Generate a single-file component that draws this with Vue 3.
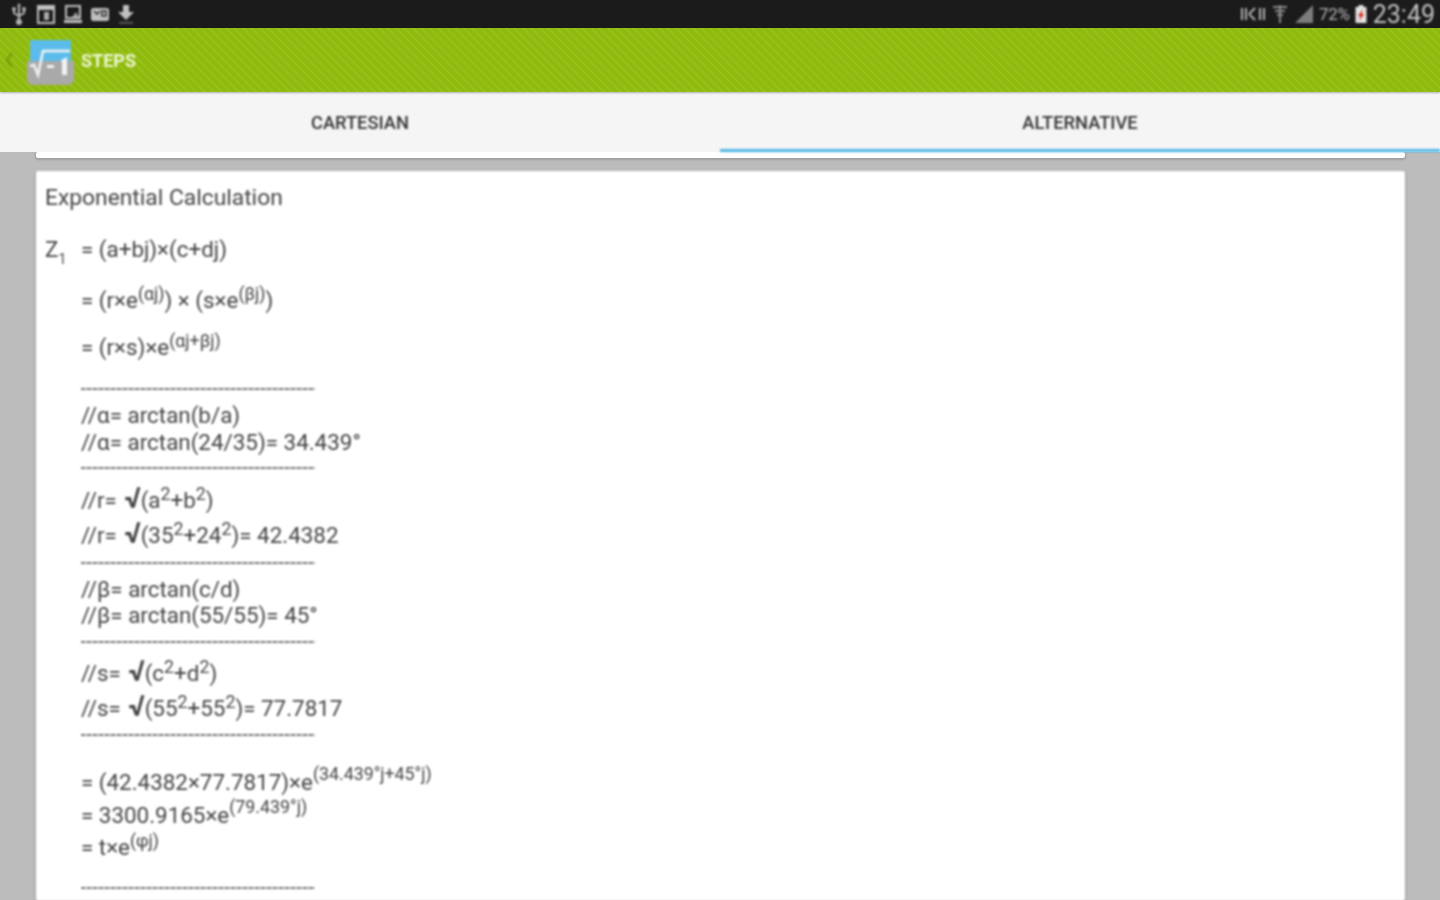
<script setup>
</script>

<template>
  <div class="screen">
    <header class="status">
      <div class="status-left">
        <svg width="20" height="24" viewBox="0 0 20 24" fill="none" stroke="#b4b4b4" stroke-width="2"><path d="M10 3v17M5 8v3l5 3 5-3V8"/><circle cx="10" cy="20" r="2" fill="#b4b4b4"/><circle cx="5" cy="7" r="2" fill="#b4b4b4" stroke="none"/><circle cx="15" cy="7" r="2" fill="#b4b4b4" stroke="none"/><path d="M8 4h4L10 1z" fill="#b4b4b4" stroke="none"/></svg>
        <svg width="20" height="22" viewBox="0 0 20 22" fill="none"><rect x="2" y="3" width="16" height="17" stroke="#c0c0c0" stroke-width="2"/><rect x="2" y="3" width="16" height="4" fill="#c0c0c0"/><rect x="8" y="9" width="5" height="8" fill="#aaa"/></svg>
        <svg width="20" height="22" viewBox="0 0 20 22" fill="none"><rect x="3" y="3" width="14" height="12" stroke="#c0c0c0" stroke-width="2"/><rect x="1" y="17" width="18" height="3" fill="#c0c0c0"/><path d="M9 14l4-5 3 5z" fill="#999"/></svg>
        <svg width="20" height="22" viewBox="0 0 20 22"><rect x="1" y="5" width="18" height="13" rx="2" fill="#c0c0c0"/><path d="M4 8l3 3 3-3M12 8h4v5h-4z" stroke="#333" stroke-width="1.6" fill="none"/></svg>
        <svg width="18" height="22" viewBox="0 0 18 22"><path d="M6 2h6v7h5l-8 8-8-8h5z" fill="#c0c0c0"/><rect x="2" y="19" width="14" height="1.6" fill="#666"/></svg>
      </div>
      <div class="status-right">
        <svg width="26" height="18" viewBox="0 0 26 18" fill="none" stroke="#b0b0b0" stroke-width="2"><path d="M2 3v12M6 3v12M9 9l6-6M9 9l6 6M20 3v12M24 3v12"/></svg>
        <svg width="18" height="20" viewBox="0 0 18 20" fill="none" stroke="#8a8a8a" stroke-width="2"><path d="M2 3h14M4 7h10M6 11h6M8 15h2M9 1v18"/></svg>
        <svg width="20" height="20" viewBox="0 0 20 20"><path d="M1 19L19 1v18z" fill="#7c7c7c"/></svg>
        <span class="pct">72%</span>
        <svg width="12" height="18" viewBox="0 0 12 18"><rect x="3.500" y="0" width="5" height="2" fill="#ddd"/><rect x="0.500" y="2" width="11" height="16" fill="#e4e4e4"/><path d="M8 4L3 11h2.500L4 16l5-7H6.500z" fill="#d8200f"/></svg>
        <span class="time">23:49</span>
      </div>
    </header>

    <div class="actionbar">
      <svg class="chev" width="10" height="18" viewBox="0 0 10 18" fill="none" stroke="#6f9a0a" stroke-width="2"><path d="M8 2L3 9l5 7"/></svg>
      <svg class="logo" width="47" height="46" viewBox="0 0 47 46">
        <rect x="3" y="0" width="41" height="24" fill="#5bbcec"/>
        <path d="M0 21h47v18a6 6 0 0 1-6 6H6a6 6 0 0 1-6-6z" fill="#a9a9a9"/>
        <path d="M3 26l4-1 4 10 5-24h27" fill="none" stroke="#f2f2f2" stroke-width="2.500"/>
        <rect x="20" y="25" width="7" height="3" fill="#f2f2f2"/>
        <path d="M34 20l6-3v18h-5V23z" fill="#f2f2f2"/>
      </svg>
      <span class="title">STEPS</span>
    </div>

    <nav class="tabs">
      <div class="tab">CARTESIAN</div>
      <div class="tab active">ALTERNATIVE</div>
    </nav>

    <main class="content">
      <div class="card card-stub"></div>
      <section class="card card-main">
        <div class="row heading">Exponential Calculation</div>
        <div class="row formula m25"><span class="label">Z<sub>1</sub></span><span>= (a+bj)×(c+dj)</span></div>
        <div class="row indent m25">= (r×e<sup>(αj)</sup>) × (s×e<sup>(βj)</sup>)</div>
        <div class="row indent m21">= (r×s)×e<sup>(αj+βj)</sup></div>
        <div class="row rule m16"></div>
        <div class="row indent">//α= arctan(b/a)</div>
        <div class="row indent m1">//α= arctan(24/35)= 34.439°</div>
        <div class="row rule"></div>
        <div class="row indent m6">//r= <span class="root">√</span>(a<sup>2</sup>+b<sup>2</sup>)</div>
        <div class="row indent m9">//r= <span class="root">√</span>(35<sup>2</sup>+24<sup>2</sup>)= 42.4382</div>
        <div class="row rule m2"></div>
        <div class="row indent">//β= arctan(c/d)</div>
        <div class="row indent">//β= arctan(55/55)= 45°</div>
        <div class="row rule m1"></div>
        <div class="row indent m5">//s= <span class="root">√</span>(c<sup>2</sup>+d<sup>2</sup>)</div>
        <div class="row indent m9">//s= <span class="root">√</span>(55<sup>2</sup>+55<sup>2</sup>)= 77.7817</div>
        <div class="row rule m1"></div>
        <div class="row indent high m21">= (42.4382×77.7817)×e<sup>(34.439°j+45°j)</sup></div>
        <div class="row indent high m7">= 3300.9165×e<sup>(79.439°j)</sup></div>
        <div class="row indent m6">= t×e<sup>(φj)</sup></div>
        <div class="row rule m15"></div>
      </section>
    </main>
  </div>
</template>

<style scoped>
.screen {
  width: 1440px;
  height: 900px;
  overflow: hidden;
  display: flex;
  flex-direction: column;
  background: #bcbcbc;
  font-family: Roboto, "Liberation Sans", sans-serif;
}
.status {
  height: 28px;
  flex: none;
  background: #1b1b1b;
  display: flex;
  justify-content: space-between;
  align-items: center;
  padding: 0 5px 0 9px;
}
.status-left,
.status-right {
  display: flex;
  align-items: center;
  filter: blur(0.8px);
}
.status-left { gap: 7px; }
.status-right { gap: 5px; }
.pct {
  color: #b5b5b5;
  font-size: 17px;
  letter-spacing: -0.3px;
}
.time {
  color: #c2c2c2;
  font-size: 25px;
  margin-left: 1px;
}
.actionbar {
  height: 64px;
  flex: none;
  display: flex;
  align-items: center;
  background-color: #8fbb0c;
  background-image: repeating-linear-gradient(45deg, rgba(255, 255, 255, 0.07) 0 2px, transparent 2px 6px);
  padding-left: 4px;
  box-shadow: 0 1px 2px rgba(0, 0, 0, 0.3);
  position: relative;
  z-index: 2;
}
.chev,
.logo,
.title { filter: blur(0.8px); }
.chev { margin-right: 13px; }
.logo { margin-top: 6px; margin-right: 7px; }
.title {
  color: #eef6d2;
  font-size: 18px;
  font-weight: 700;
}
.tabs {
  height: 60px;
  flex: none;
  display: grid;
  grid-template-columns: 1fr 1fr;
  background: #f5f5f5;
  position: relative;
  z-index: 1;
}
.tab {
  display: flex;
  align-items: center;
  justify-content: center;
  color: #333;
  font-size: 18.3px;
  font-weight: 500;
  filter: blur(0.8px);
}
.tab.active {
  border-bottom: 3px solid #4fb6e6;
  padding-top: 3px;
}
.content {
  flex: 1;
  padding: 0 35px 0 36px;
  display: flex;
  flex-direction: column;
  gap: 13px;
}
.card {
  background: #fff;
  box-shadow: 0 1px 2px 1px #a0a0a0;
  border-radius: 2px;
}
.card-stub {
  height: 6px;
  flex: none;
}
.card-main {
  flex: 1;
  padding: 14px 9px 0;
  color: #444;
  font-size: 22.4px;
  filter: blur(0.8px);
}
.row {
  height: 26px;
  line-height: 26px;
  white-space: nowrap;
}
.heading { font-size: 22.8px; }
.indent { padding-left: 36px; }
.formula { display: flex; }
.label { width: 36px; flex: none; }
.root {
  font-size: 29px;
  font-weight: 700;
  line-height: 0;
  margin-left: 2px;
}
sub {
  font-size: 14px;
  line-height: 0;
  vertical-align: -7px;
}
sup {
  font-size: 17.8px;
  line-height: 0;
  vertical-align: 8px;
}
.high sup { vertical-align: 10px; }
.rule {
  margin-left: 36px;
  width: 234px;
  position: relative;
}
.rule::after {
  content: "";
  position: absolute;
  left: 0;
  right: 0;
  top: 12px;
  height: 2px;
  background: repeating-linear-gradient(90deg, #777 0 4px, #bbb 4px 6px);
}
.m1 { margin-top: 1px; }
.m2 { margin-top: 2px; }
.m5 { margin-top: 5px; }
.m6 { margin-top: 6px; }
.m7 { margin-top: 7px; }
.m9 { margin-top: 9px; }
.m15 { margin-top: 15px; }
.m16 { margin-top: 16px; }
.m21 { margin-top: 21px; }
.m25 { margin-top: 25px; }
</style>

<style>
html, body { overflow: hidden; }
</style>
